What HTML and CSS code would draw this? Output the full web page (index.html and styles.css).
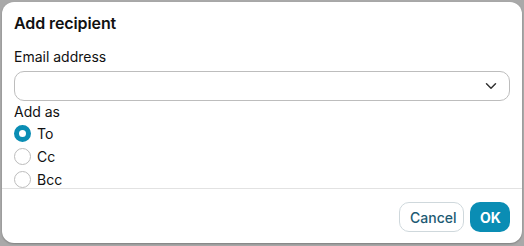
FILE: index.html
```html
<!DOCTYPE html>
<html>
<head>
<meta charset="utf-8">
<link rel="stylesheet" href="styles.css">
</head>
<body>
<div class="dialog">
  <div class="body">
    <h1 class="title">Add recipient</h1>
    <label class="label">Email address</label>
    <div class="combo">
      <svg class="chev" width="12" height="8" viewBox="0 0 12 8"><path d="M1.5 1.8 L6 6.2 L10.5 1.8" fill="none" stroke="#333" stroke-width="1.5" stroke-linecap="round" stroke-linejoin="round"/></svg>
    </div>
    <div class="label small">Add as</div>
    <div class="radios">
      <div class="radio"><span class="dot checked"></span><span>To</span></div>
      <div class="radio"><span class="dot"></span><span>Cc</span></div>
      <div class="radio"><span class="dot"></span><span>Bcc</span></div>
    </div>
  </div>
  <div class="footer">
    <button class="btn cancel">Cancel</button>
    <button class="btn ok">OK</button>
  </div>
</div>
</body>
</html>
```
FILE: styles.css
```css
html, body { margin: 0; padding: 0; }
body {
  background: #a9a9a9;
  width: 524px;
  height: 246px;
  font-family: Inter, "Noto Sans", sans-serif;
  color: #111;
  padding: 2px 0 0 2px;
  box-sizing: border-box;
}
.dialog {
  width: 520px;
  height: 241px;
  background: #fff;
  border-radius: 12px;
  box-shadow: 0 1px 2px rgba(0,0,0,0.25);
  display: flex;
  flex-direction: column;
  overflow: hidden;
}
.body {
  padding: 11px 12px 0 12px;
  flex: 1;
  min-height: 0;
  border-bottom: 1px solid #e2e2e2;
  display: flex;
  flex-direction: column;
  overflow: hidden;
}
.body > * { flex-shrink: 0; }
.title {
  margin: 0;
  font-size: 16px;
  font-weight: 600;
  line-height: 20px;
  letter-spacing: -0.1px;
}
.label {
  display: block;
  font-size: 14px;
  line-height: 18px;
  margin-top: 15px;
}
.label.small { margin-top: 2px; }
.combo {
  margin-top: 5px;
  height: 28px;
  border: 1px solid #bdbdbd;
  border-radius: 10px;
  display: flex;
  align-items: center;
  justify-content: flex-end;
  padding-right: 12px;
}
.radios {
  display: flex;
  flex-direction: column;
  margin-top: 1px;
}
.radio {
  display: flex;
  align-items: center;
  height: 23px;
  flex-shrink: 0;
  font-size: 14px;
  gap: 6px;
}
.dot {
  width: 17px;
  height: 17px;
  border: 1px solid #bcbcbc;
  border-radius: 50%;
  box-sizing: border-box;
  background: #fff;
}
.dot.checked {
  border: 5.5px solid #0a8db4;
  background: #fff;
}
.footer {
  display: flex;
  justify-content: flex-end;
  gap: 6px;
  padding: 13px 12px 11px 0;
}
.btn {
  font-family: Inter, "Noto Sans", sans-serif;
  font-size: 14px;
  height: 30px;
  border-radius: 10px;
  padding: 0 10px;
  cursor: pointer;
}
.cancel {
  background: #fff;
  border: 1px solid #cfd8dc;
  color: #1d5a73;
  font-weight: 500;
  width: 65px;
}
.ok {
  background: #0a8db4;
  border: none;
  color: #fff;
  font-weight: 700;
  width: 40px;
}
```
